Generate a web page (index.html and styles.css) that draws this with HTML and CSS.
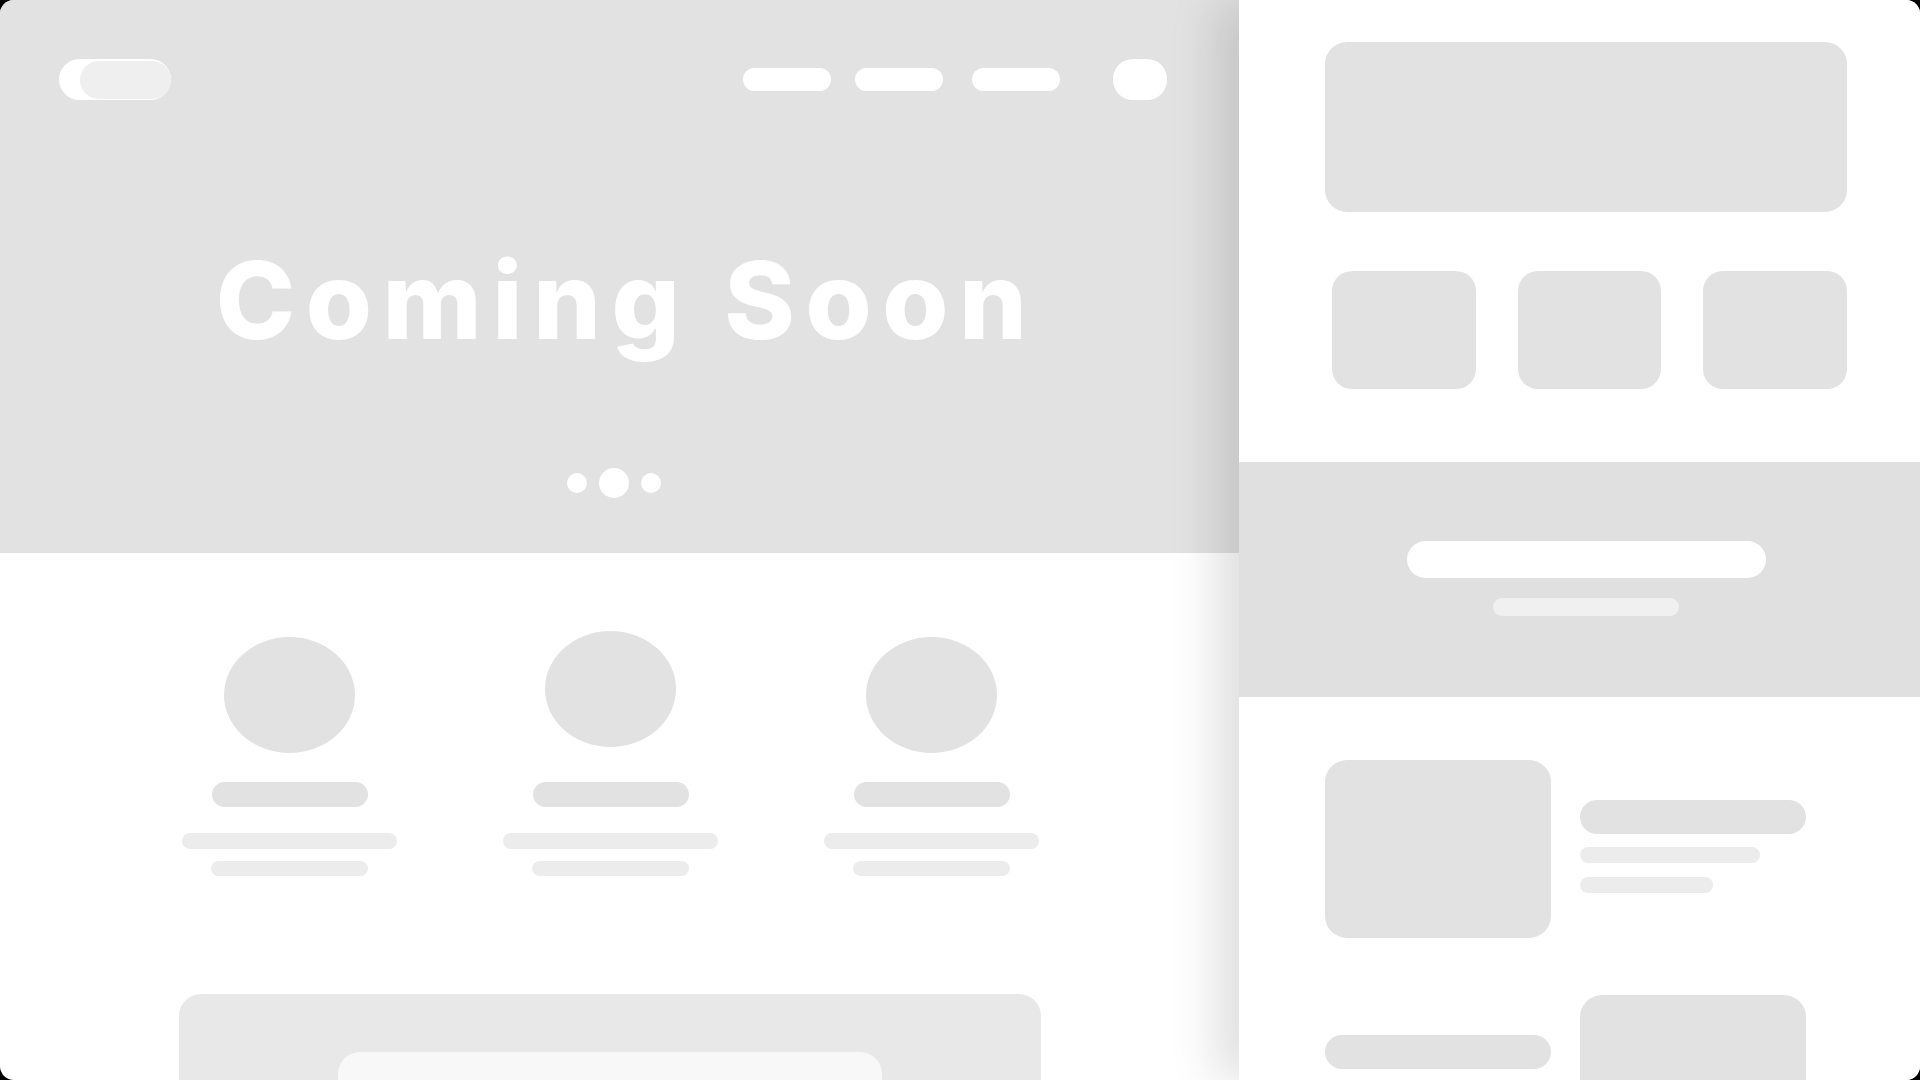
FILE: index.html
```html
<!DOCTYPE html>
<html lang="en">
<head>
  <meta charset="UTF-8">
  <title>Coming Soon - Wireframe</title>
  <link rel="stylesheet" href="styles.css">
</head>
<body>

  <div class="frame">

    <!-- desktop page -->
    <div class="site">
      <header class="hero">
        <nav class="nav">
          <div class="logo"><span class="logo-inner"></span></div>
          <div class="menu">
            <span class="menu-item"></span>
            <span class="menu-item"></span>
            <span class="menu-item"></span>
            <span class="menu-btn"></span>
          </div>
        </nav>
        <h1 class="title">Coming Soon</h1>
        <div class="dots">
          <span class="dot"></span>
          <span class="dot big"></span>
          <span class="dot"></span>
        </div>
      </header>

      <section class="features">
        <div class="feature">
          <div class="avatar"></div>
          <div class="bar-title"></div>
          <div class="line wide"></div>
          <div class="line"></div>
        </div>
        <div class="feature">
          <div class="avatar up"></div>
          <div class="bar-title"></div>
          <div class="line wide"></div>
          <div class="line"></div>
        </div>
        <div class="feature">
          <div class="avatar"></div>
          <div class="bar-title"></div>
          <div class="line wide"></div>
          <div class="line"></div>
        </div>
      </section>

      <section class="cta">
        <div class="cta-inner"></div>
      </section>
    </div>

    <!-- mobile page -->
    <div class="mobile">
      <div class="m-top">
        <div class="m-banner"></div>
        <div class="m-tiles">
          <div class="m-tile"></div>
          <div class="m-tile"></div>
          <div class="m-tile"></div>
        </div>
      </div>

      <div class="m-band">
        <div class="m-pill"></div>
        <div class="m-sub"></div>
      </div>

      <div class="m-list">
        <div class="m-row">
          <div class="m-thumb"></div>
          <div class="m-text">
            <div class="m-head"></div>
            <div class="m-line"></div>
            <div class="m-line short"></div>
          </div>
        </div>
        <div class="m-row second">
          <div class="m-btn"></div>
          <div class="m-box"></div>
        </div>
      </div>
    </div>

  </div>

</body>
</html>
```

FILE: styles.css
```css
* {
  box-sizing: border-box;
}

html, body {
  margin: 0;
  height: 100%;
}

body {
  background: #000;
  font-family: Inter, 'Open Sans', 'Liberation Sans', sans-serif;
}

.frame {
  display: flex;
  width: 1920px;
  height: 1080px;
  background: #fff;
  border-radius: 14px;
  overflow: hidden;
}

/* ---------- desktop ---------- */

.site {
  width: 1239px;
  flex-shrink: 0;
}

.hero {
  height: 553px;
  background: #e2e2e2;
  padding: 59px 72px 0 59px;
}

.nav {
  display: flex;
  justify-content: space-between;
  align-items: center;
  height: 41px;
}

.logo {
  display: flex;
  justify-content: flex-end;
  align-items: center;
  width: 112px;
  height: 41px;
  background: #fff;
  border-radius: 21px;
}

.logo-inner {
  width: 91px;
  height: 38px;
  background: #efefef;
  border-radius: 19px;
}

.menu {
  display: flex;
  align-items: center;
}

.menu-item {
  width: 88px;
  height: 23px;
  background: #fff;
  border-radius: 12px;
  margin-left: 24px;
}

.menu-item:first-child {
  margin-left: 0;
}

.menu-item:nth-child(3) {
  margin-left: 29px;
}

.menu-btn {
  width: 54px;
  height: 41px;
  background: #fff;
  border-radius: 20px;
  margin-left: 53px;
}

.title {
  margin: 147px -72px 0 -59px;
  padding-left: 14px;
  font-size: 107px;
  line-height: 1;
  font-weight: 800;
  letter-spacing: 10.5px;
  color: #fff;
  text-align: center;
}

.dots {
  display: flex;
  justify-content: center;
  align-items: center;
  gap: 12px;
  margin: 114px -72px 0 -71px;
  height: 30px;
}

.dot {
  width: 20px;
  height: 20px;
  background: #fff;
  border-radius: 50%;
}

.dot.big {
  width: 30px;
  height: 30px;
}

.features {
  display: grid;
  grid-template-columns: repeat(3, 321px);
  width: 963px;
  margin-left: 129px;
  padding-top: 78px;
}

.feature {
  display: flex;
  flex-direction: column;
  align-items: center;
}

.avatar {
  width: 131px;
  height: 116px;
  border-radius: 50%;
  background: #e2e2e2;
  margin-top: 6px;
  margin-bottom: 29px;
}

.avatar.up {
  margin-top: 0;
  margin-bottom: 35px;
}

.bar-title {
  width: 156px;
  height: 25px;
  border-radius: 13px;
  background: #e2e2e2;
}

.line {
  width: 157px;
  height: 15px;
  border-radius: 8px;
  background: #ececec;
  margin-top: 12px;
}

.line.wide {
  width: 215px;
  height: 16px;
  margin-top: 26px;
}

.cta {
  display: flex;
  justify-content: center;
  width: 862px;
  height: 300px;
  margin: 118px 0 0 179px;
  padding-top: 58px;
  background: #e8e8e8;
  border-radius: 22px;
}

.cta-inner {
  width: 544px;
  height: 200px;
  background: #f8f8f8;
  border-radius: 22px;
}

/* ---------- mobile ---------- */

.mobile {
  flex: 1;
  position: relative;
  z-index: 1;
  background: #fff;
  box-shadow: -22px 0 45px rgba(0, 0, 0, 0.13);
}

.m-top {
  padding: 42px 73px 0 86px;
  height: 462px;
}

.m-banner {
  height: 170px;
  background: #e2e2e2;
  border-radius: 22px;
}

.m-tiles {
  display: grid;
  grid-template-columns: repeat(3, 1fr);
  gap: 42px;
  margin: 59px 0 0 7px;
}

.m-tile {
  height: 118px;
  background: #e2e2e2;
  border-radius: 20px;
}

.m-band {
  display: flex;
  flex-direction: column;
  align-items: center;
  height: 235px;
  background: #e0e0e0;
  padding: 79px 73px 0 86px;
}

.m-pill {
  width: 359px;
  height: 37px;
  background: #fff;
  border-radius: 19px;
}

.m-sub {
  width: 186px;
  height: 18px;
  background: #f0f0f0;
  border-radius: 9px;
  margin-top: 20px;
}

.m-list {
  padding: 63px 73px 0 86px;
}

.m-row {
  display: flex;
  gap: 29px;
}

.m-thumb {
  width: 226px;
  height: 178px;
  background: #e2e2e2;
  border-radius: 22px;
}

.m-text {
  padding-top: 40px;
}

.m-head {
  width: 226px;
  height: 34px;
  background: #e2e2e2;
  border-radius: 17px;
}

.m-line {
  width: 180px;
  height: 16px;
  background: #ececec;
  border-radius: 8px;
  margin-top: 13px;
}

.m-line.short {
  width: 133px;
  margin-top: 14px;
}

.m-row.second {
  margin-top: 57px;
}

.m-btn {
  width: 226px;
  height: 34px;
  background: #e2e2e2;
  border-radius: 17px;
  margin-top: 40px;
}

.m-box {
  width: 226px;
  height: 200px;
  background: #e2e2e2;
  border-radius: 22px;
}
```
